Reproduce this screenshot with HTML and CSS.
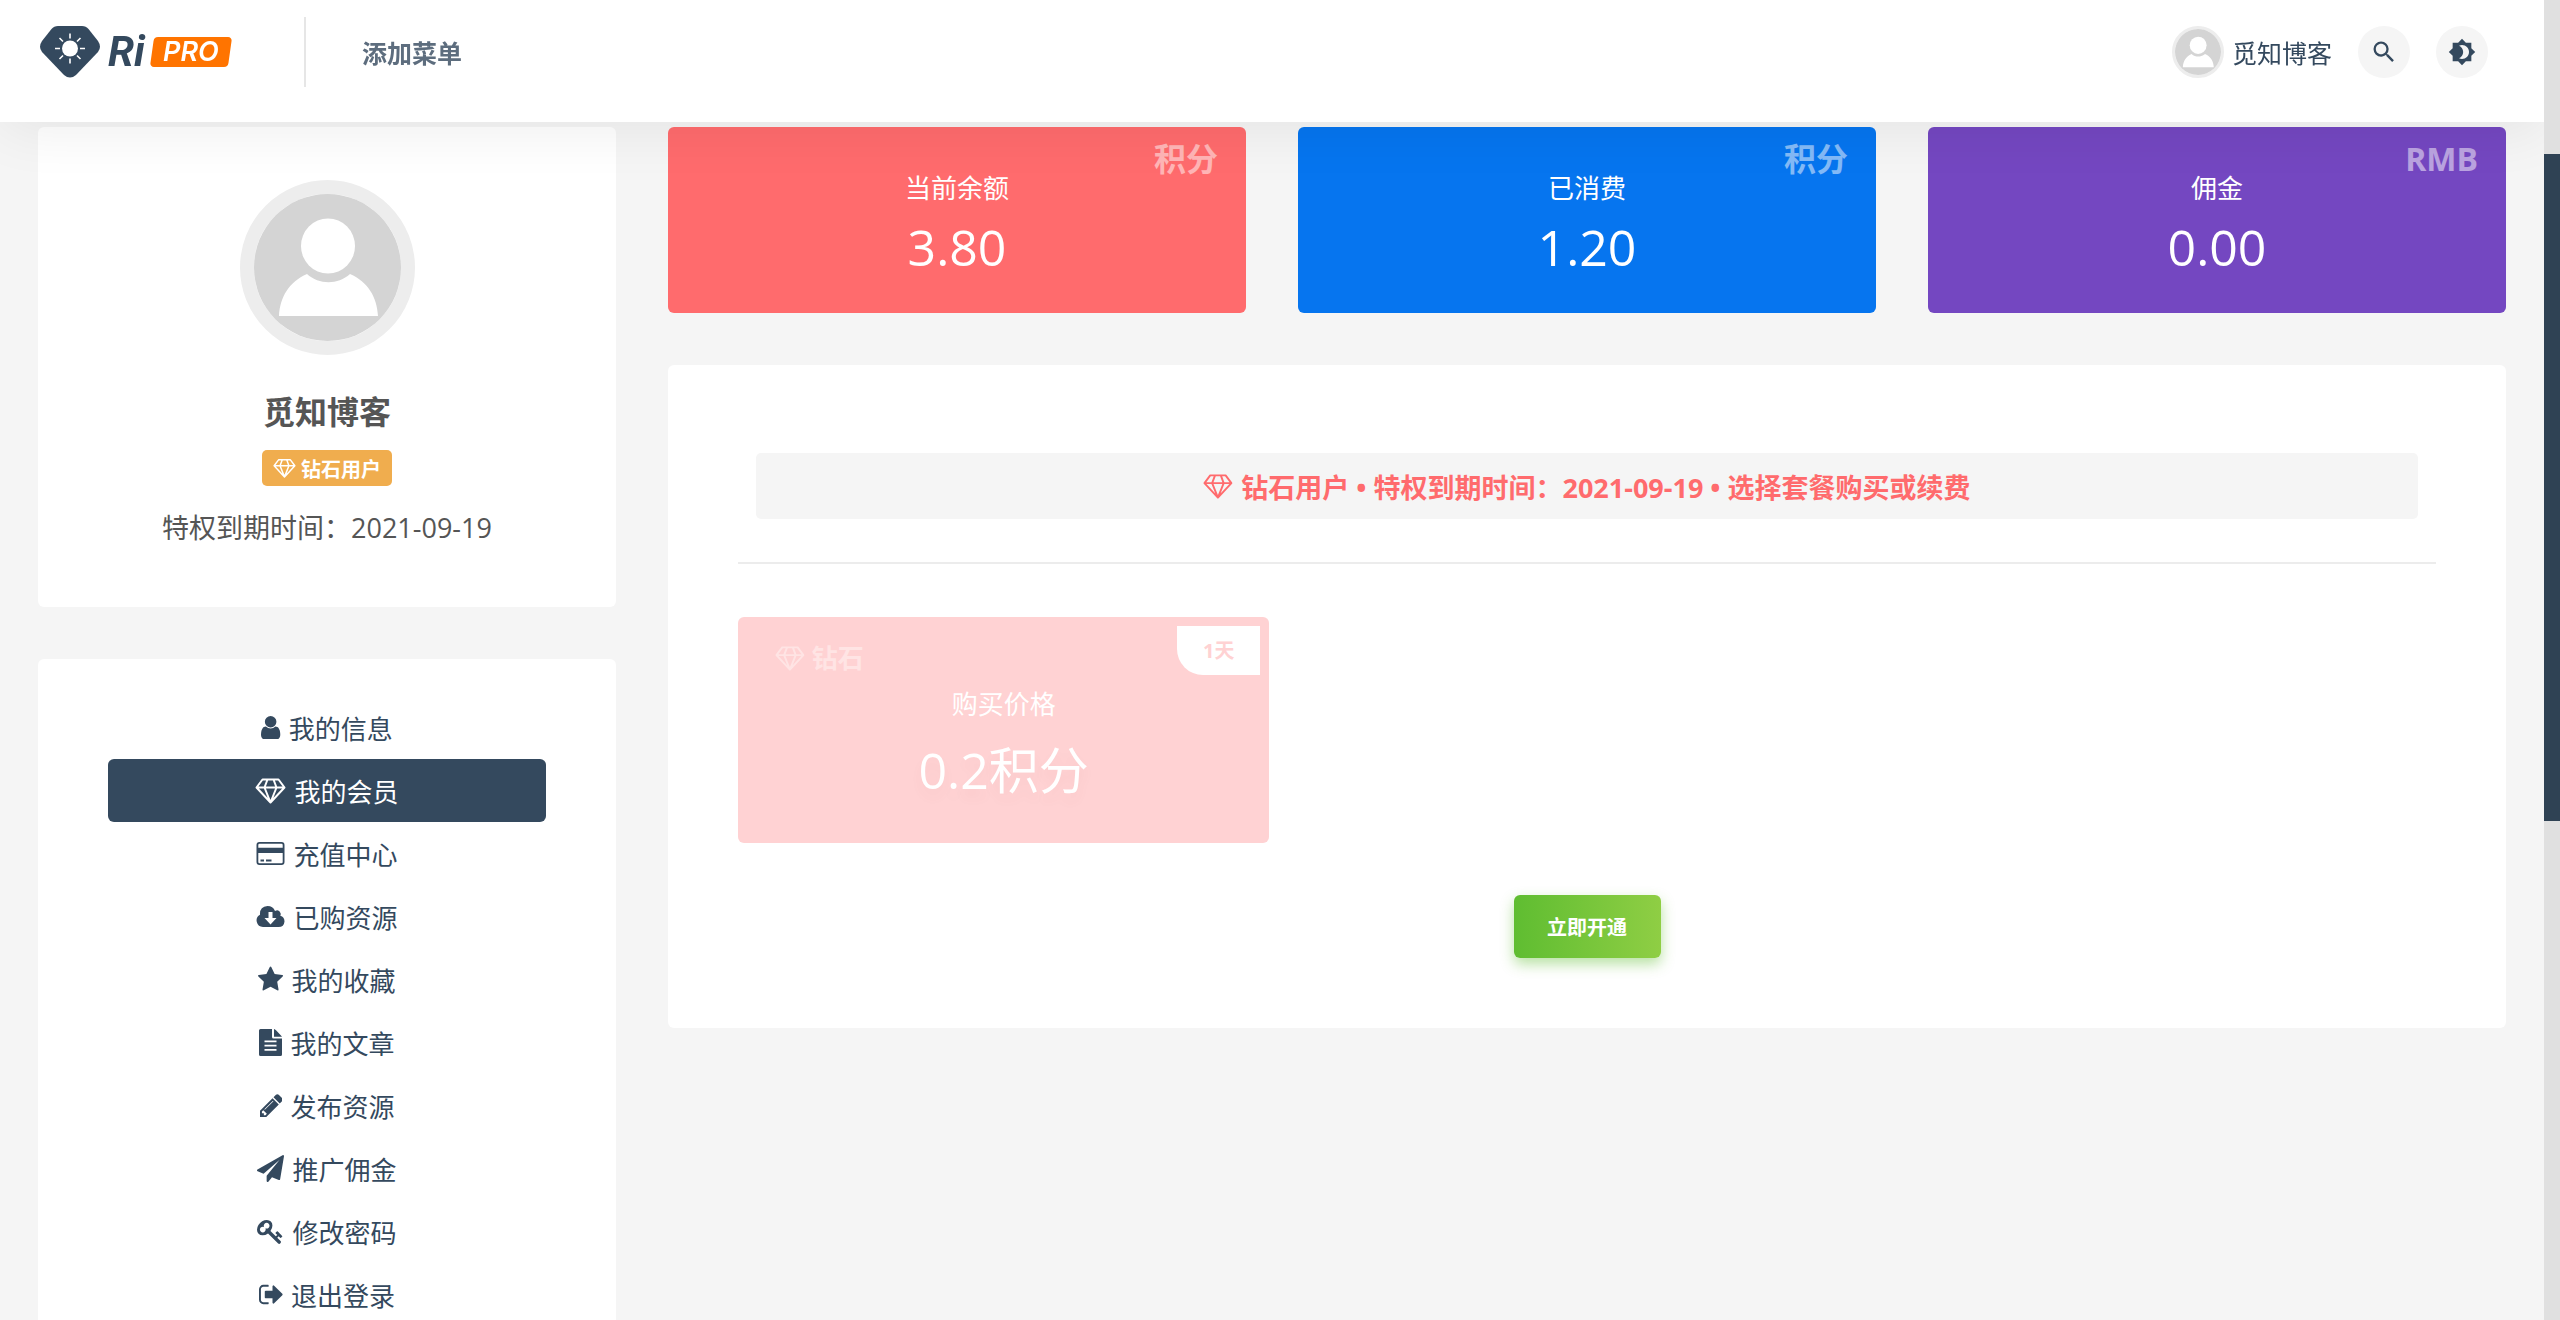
FILE: index.html
```html
<!DOCTYPE html>
<html lang="zh-CN">
<head>
<meta charset="utf-8">
<title>我的会员 - RiPRO</title>
<meta name="viewport" content="width=device-width, initial-scale=1">
<link rel="stylesheet" href="styles.css">
</head>
<body>
<svg class="sprite" aria-hidden="true">
  <symbol id="i-gem" viewBox="0 0 31 27"><path d="M7.5 2.5h16l6 8L15.500 25.500 1.500 10.500zM1.500 10.500h28M12.500 2.500l-3 8 6 15 6-15-3-8" fill="none" stroke="currentColor" stroke-width="2" stroke-linejoin="round"/></symbol>
  <symbol id="i-face" viewBox="0 0 147 147"><rect width="147" height="147" fill="#d4d4d4"/><ellipse cx="74" cy="52" rx="27" ry="27.500" fill="#fff"/><path d="M25 122c1-19 10-34 28-42 12 11 31 11 43 0 18 8 27 23 28 42z" fill="#fff"/></symbol>
</svg>
<div class="page">
  <header class="header">
    <a class="logo" href="#" aria-label="RiPRO">
      <svg class="logo-mark" viewBox="0 0 60 52"><path d="M18 0h24q4 0 6.500 3L58 15q4 6 0 11L36 49q-6 5-12 0L2 26q-4-5 0-11L11.500 3Q14 0 18 0z" fill="#34495e"/><circle cx="30" cy="22.500" r="8" fill="#fff"/><path d="M30 7.500v5M30 32.500v5M15 22.500h5M40 22.500h5M19.500 12l3.500 3.500M37 29.500l3.500 3.500M40.500 12L37 15.500M23 29.500L19.500 33" stroke="#fff" stroke-width="1.600"/></svg>
      <span class="logo-ri">Ri</span><span class="logo-pro">PRO</span>
    </a>
    <nav class="main-nav"><a href="#">添加菜单</a></nav>
    <div class="actions">
      <a class="account" href="#"><svg class="avatar-small"><use href="#i-face"/></svg>觅知博客</a>
      <button class="round" aria-label="搜索"><svg viewBox="0 0 24 24"><path d="M15.500 14h-.79l-.28-.27A6.470 6.470 0 0 0 16 9.500 6.500 6.500 0 1 0 9.500 16c1.610 0 3.090-.59 4.230-1.570l.27.28v.79l5 4.990L20.490 19l-4.990-5zm-6 0C7.010 14 5 11.990 5 9.500S7.010 5 9.500 5 14 7.010 14 9.500 11.990 14 9.500 14z"/></svg></button>
      <button class="round" aria-label="切换主题"><svg viewBox="0 0 24 24"><path d="M20 8.690V4h-4.690L12 .69 8.690 4H4v4.690L.69 12 4 15.310V20h4.690L12 23.310 15.310 20H20v-4.690L23.310 12 20 8.690zM12 18c-.89 0-1.740-.2-2.500-.55C11.560 16.500 13 14.420 13 12s-1.440-4.500-3.500-5.450C10.260 6.200 11.110 6 12 6c3.310 0 6 2.690 6 6s-2.690 6-6 6z"/></svg></button>
    </div>
  </header>

  <main class="content">
    <aside class="sidebar">
      <section class="card profile">
        <svg class="avatar"><use href="#i-face"/></svg>
        <h1 class="name">觅知博客</h1>
        <span class="level"><svg viewBox="0 0 31 27"><use href="#i-gem"/></svg>钻石用户</span>
        <p class="expiry">特权到期时间：2021-09-19</p>
      </section>
      <nav class="card menu">
        <a href="#"><svg viewBox="256 0 1280 1792"><path d="M1536 1399q0 109-62.500 187t-150.500 78h-854q-88 0-150.500-78t-62.500-187q0-85 8.500-160.500t31.500-152 58.500-131 94-89 134.500-34.500q131 128 313 128t313-128q76 0 134.500 34.500t94 89 58.500 131 31.500 152 8.500 160.500zm-256-887q0 159-112.500 271.500t-271.500 112.500-271.500-112.500-112.500-271.500 112.500-271.500 271.500-112.500 271.500 112.500 112.500 271.500z"/></svg>我的信息</a>
        <a href="#" class="active" aria-current="page"><svg viewBox="0 0 31 27"><use href="#i-gem"/></svg>我的会员</a>
        <a href="#"><svg viewBox="0 0 29 27"><path fill-rule="evenodd" d="M3.500 2h22a3 3 0 0 1 3 3v17a3 3 0 0 1-3 3h-22a3 3 0 0 1-3-3V5a3 3 0 0 1 3-3zm0 1.800Q2.300 3.800 2.300 5v2.800h24.400V5q0-1.200-1.200-1.200zM2.300 13v9q0 1.200 1.200 1.200h22q1.200 0 1.200-1.200v-9zM4.500 19.500h3.500v2H4.500zM10 19.500h5.500v2H10z"/></svg>充值中心</a>
        <a href="#"><svg viewBox="0 0 29 27"><path fill-rule="evenodd" d="M7 24a6.500 6.500 0 0 1-3-12.200Q3.500 3.500 11.500 3q5.500 0 7.500 5 4-2 5.500 2 .5 1.500-.2 2.800Q28.500 14 28.500 18.500 28 24 22.500 24zm5.500-15v6H8.500l6 6.500 6-6.500h-4V9z"/></svg>已购资源</a>
        <a href="#"><svg viewBox="64 0 1664 1792"><path d="M1728 647q0 22-26 48l-363 354 86 500q1 7 1 20 0 21-10.500 35.500t-30.500 14.500q-19 0-40-12l-449-236-449 236q-22 12-40 12-21 0-31.500-14.500t-10.500-35.500q0-6 2-20l86-500-364-354q-25-27-25-48 0-37 56-46l502-73 225-455q19-41 49-41t49 41l225 455 502 73q56 9 56 46z"/></svg>我的收藏</a>
        <a href="#"><svg viewBox="0 0 23 27"><path fill-rule="evenodd" d="M1.500 0H13v8q0 1.500 1.500 1.500H23v16q0 1.500-1.500 1.500h-20Q0 27 0 25.500v-24Q0 0 1.500 0zM15 0q1 .5 2 1.300L21.500 6q1 1 1.500 1.800h-8zM5.500 11.500v1.700h12v-1.700zM5.500 15.700v1.700h12v-1.700zM5.500 20v1.700h12V20z"/></svg>我的文章</a>
        <a href="#"><svg viewBox="128 0 1515 1792"><path d="M491 1536l91-91-235-235-91 91v107h128v128h107zm523-928q0-22-22-22-10 0-17 7l-542 542q-7 7-7 17 0 22 22 22 10 0 17-7l542-542q7-7 7-17zm-54-192l416 416-832 832h-416v-416zm683 96q0 53-37 90l-166 166-416-416 166-165q36-38 90-38 53 0 91 38l235 234q37 39 37 91z"/></svg>发布资源</a>
        <a href="#"><svg viewBox="0 0 1792 1792"><path d="M1764 11q33 24 27 64l-256 1536q-5 29-32 45-14 8-31 8-11 0-24-5l-453-185-242 295q-18 23-49 23-13 0-22-4-19-7-30.500-23.500t-11.500-36.500v-349l864-1059-1069 925-395-162q-37-14-40-55-2-40 32-59l1664-960q15-9 32-9 20 0 36 11z"/></svg>推广佣金</a>
        <a href="#"><svg viewBox="0 0 1792 1792"><path d="M832 512q0-80-56-136t-136-56-136 56-56 136q0 42 19 83-41-19-83-19-80 0-136 56t-56 136 56 136 136 56 136-56 56-136q0-42-19-83 41 19 83 19 80 0 136-56t56-136zm851 704q0 17-49 66t-66 49q-9 0-28.500-16t-36.500-33-38.500-40-24.500-26l-96 96 220 220q28 28 28 68 0 42-39 81t-81 39q-40 0-68-28l-671-671q-176 131-365 131-163 0-265.500-102.500t-102.500-265.500q0-160 95-313t248-248 313-95q163 0 265.500 102.500t102.500 265.500q0 189-131 365l355 355 96-96q-3-3-26-24.500t-40-38.500-33-36.500-16-28.500q0-17 49-66t66-49q13 0 23 10 6 6 46 44.500t82 79.500 86.500 86 73 78 28.500 41z"/></svg>修改密码</a>
        <a href="#"><svg viewBox="64 0 1600 1792"><path d="M704 1440q0 4 1 20t.5 26.500-3 23.500-10 19.500-20.500 6.500h-320q-119 0-203.500-84.500t-84.500-203.500v-704q0-119 84.500-203.500t203.500-84.500h320q13 0 22.500 9.500t9.500 22.500q0 4 1 20t.5 26.500-3 23.500-10 19.500-20.500 6.500h-320q-66 0-113 47t-47 113v704q0 66 47 113t113 47h312l11.500 1 11.500 3 8 5.500 7 9 2 13.500zm928-544q0 26-19 45l-544 544q-19 19-45 19t-45-19-19-45v-288h-448q-26 0-45-19t-19-45v-384q0-26 19-45t45-19h448v-288q0-26 19-45t45-19 45 19l544 544q19 19 19 45z"/></svg>退出登录</a>
      </nav>
    </aside>

    <div class="main">
      <section class="stats">
        <div class="stat red"><span class="unit">积分</span><p class="label">当前余额</p><p class="value">3.80</p></div>
        <div class="stat blue"><span class="unit">积分</span><p class="label">已消费</p><p class="value">1.20</p></div>
        <div class="stat purple"><span class="unit">RMB</span><p class="label">佣金</p><p class="value">0.00</p></div>
      </section>
      <section class="card panel">
        <p class="notice"><svg viewBox="0 0 31 27"><use href="#i-gem"/></svg>钻石用户 • 特权到期时间：2021-09-19 • 选择套餐购买或续费</p>
        <hr>
        <div class="plans">
          <button class="plan" type="button">
            <span class="plan-name"><svg viewBox="0 0 31 27"><use href="#i-gem"/></svg>钻石</span>
            <span class="plan-days">1天</span>
            <span class="label">购买价格</span>
            <span class="value">0.2积分</span>
          </button>
        </div>
        <button class="submit" type="button">立即开通</button>
      </section>
    </div>
  </main>
</div>
<div class="scrollbar" aria-hidden="true"><div class="thumb"></div></div>
</body>
</html>
```

FILE: styles.css
```css
* { box-sizing: border-box; }

body {
  display: flex;
  height: 100vh;
  margin: 0;
  overflow: hidden;
  background: #f5f5f5;
  color: #555;
  font-family: "Open Sans", "Noto Sans CJK SC", sans-serif;
  font-size: 27px;
}

h1, p { margin: 0; }
a { color: inherit; text-decoration: none; }
button { border: 0; padding: 0; font-family: inherit; cursor: pointer; }
svg { display: block; flex: none; fill: currentColor; }
.sprite { position: absolute; width: 0; height: 0; }

.page { flex: 1; height: 100vh; overflow: hidden; }

/* Header */
.header {
  position: sticky;
  top: 0;
  z-index: 2;
  display: flex;
  align-items: center;
  height: 122px;
  padding: 0 56px 18px 40px;
  background: #fff;
  box-shadow: 0 8px 56px rgba(0, 0, 0, .07);
  color: #34495e;
  font-size: 25px;
}
.logo { display: flex; align-items: center; }
.logo-mark { width: 60px; height: 52px; margin-right: 8px; }
.logo-ri {
  width: 44px;
  font: italic 700 42px/52px Roboto, sans-serif;
}
.logo-pro {
  position: relative;
  z-index: 0;
  width: 78px;
  color: #fff;
  font: italic 600 27px/30px Inter, sans-serif;
  text-align: center;
}
/* slanted plate behind the word */
.logo-pro::before {
  content: "";
  position: absolute;
  inset: 0;
  z-index: -1;
  border-radius: 4px;
  background: #ff7400;
  transform: skewX(-8deg);
}
.main-nav {
  display: flex;
  align-items: center;
  height: 70px;
  margin-left: 74px;
  padding-left: 56px;
  border-left: 2px solid #e6e6e6;
  color: #5d6d7e;
  font-weight: 700;
}
.actions { display: flex; align-items: center; gap: 26px; margin-left: auto; }
.account { display: flex; align-items: center; gap: 8px; }
.avatar-small {
  width: 52px;
  height: 52px;
  border: 3px solid #ededed;
  border-radius: 50%;
}
.round {
  display: flex;
  align-items: center;
  justify-content: center;
  width: 52px;
  height: 52px;
  border-radius: 50%;
  background: #f5f5f5;
  color: #34495e;
}
.round svg { width: 28px; height: 28px; }

/* Layout */
.content {
  display: grid;
  grid-template-columns: repeat(4, 1fr);
  gap: 52px;
  align-items: start;
  padding: 5px 38px;
}
.sidebar, .main { display: grid; gap: 52px; }
.main { grid-column: span 3; }
.card { border-radius: 6px; background: #fff; }

/* Profile */
.profile {
  display: flex;
  flex-direction: column;
  align-items: center;
  padding: 53px 0 61px;
}
.avatar {
  width: 175px;
  height: 175px;
  border: 14px solid #ededed;
  border-radius: 50%;
}
.name { margin-top: 35px; font-size: 32px; line-height: 44px; }
.level {
  display: flex;
  align-items: center;
  gap: 5px;
  height: 36px;
  margin-top: 16px;
  padding: 0 11px;
  border-radius: 5px;
  background: #f0ad4e;
  color: #fff;
  font-size: 20px;
  font-weight: 700;
}
.level svg { height: 20px; }
.expiry { margin-top: 24px; line-height: 36px; }

/* Account menu */
.menu { padding: 37px 70px; color: #34495e; font-size: 26px; }
.menu a {
  display: flex;
  align-items: center;
  justify-content: center;
  gap: 8px;
  height: 63px;
  border-radius: 6px;
}
.menu svg { height: 27px; }
.menu .active { background: #34495e; color: #fff; }

/* Balances */
.stats { display: grid; grid-template-columns: repeat(3, 1fr); gap: 52px; }
.stat {
  position: relative;
  padding: 41px 0 34px;
  border-radius: 6px;
  color: #fff;
  text-align: center;
}
.red { background: #ff6b6d; }
.blue { background: #0675ef; }
.purple { background: #7447c1; }
.label { display: block; font-size: 26px; line-height: 40px; }
.value { display: block; margin-top: 7px; font-size: 50px; line-height: 64px; }
.unit {
  position: absolute;
  top: 12px;
  right: 28px;
  opacity: .5;
  font-size: 32px;
  font-weight: 700;
  line-height: 40px;
}

/* Membership panel */
.panel { padding: 88px 70px 70px; }
.notice {
  display: flex;
  align-items: center;
  justify-content: center;
  gap: 8px;
  height: 66px;
  margin: 0 18px;
  border-radius: 5px;
  background: #f5f5f5;
  color: #ff6b6d;
  font-weight: 700;
}
.notice svg { height: 26px; }
hr { height: 2px; margin: 43px 0 53px; border: 0; background: #ececec; }
.plans { display: grid; grid-template-columns: repeat(3, 1fr); gap: 52px; }
.plan {
  position: relative;
  padding: 67px 0 41px;
  border-radius: 6px;
  background: #ffd2d3;
  color: #fff;
}
.plan .value { margin-top: 14px; text-shadow: 0 8px 12px rgba(160, 80, 80, .06); }
.plan-name {
  position: absolute;
  top: 21px;
  left: 37px;
  display: flex;
  align-items: center;
  gap: 7px;
  color: #ffe4e4;
  font-size: 26px;
  font-weight: 700;
  line-height: 40px;
}
.plan-name svg { height: 26px; }
.plan-days {
  position: absolute;
  top: 9px;
  right: 9px;
  width: 83px;
  border-radius: 0 0 0 26px;
  background: #fff;
  color: #ffd2d3;
  font-size: 20px;
  font-weight: 700;
  line-height: 49px;
}
.submit {
  display: block;
  width: 147px;
  height: 63px;
  margin: 52px auto 0;
  border-radius: 6px;
  background: linear-gradient(90deg, #5fbd31, #8fce44);
  box-shadow: 0 6px 14px rgba(95, 189, 49, .45);
  color: #fff;
  font-size: 20px;
  font-weight: 700;
}

/* Scrollbar */
.scrollbar { width: 16px; padding-top: 154px; background: #e0e0e0; }
.thumb { height: 667px; background: #2f4254; }
```
